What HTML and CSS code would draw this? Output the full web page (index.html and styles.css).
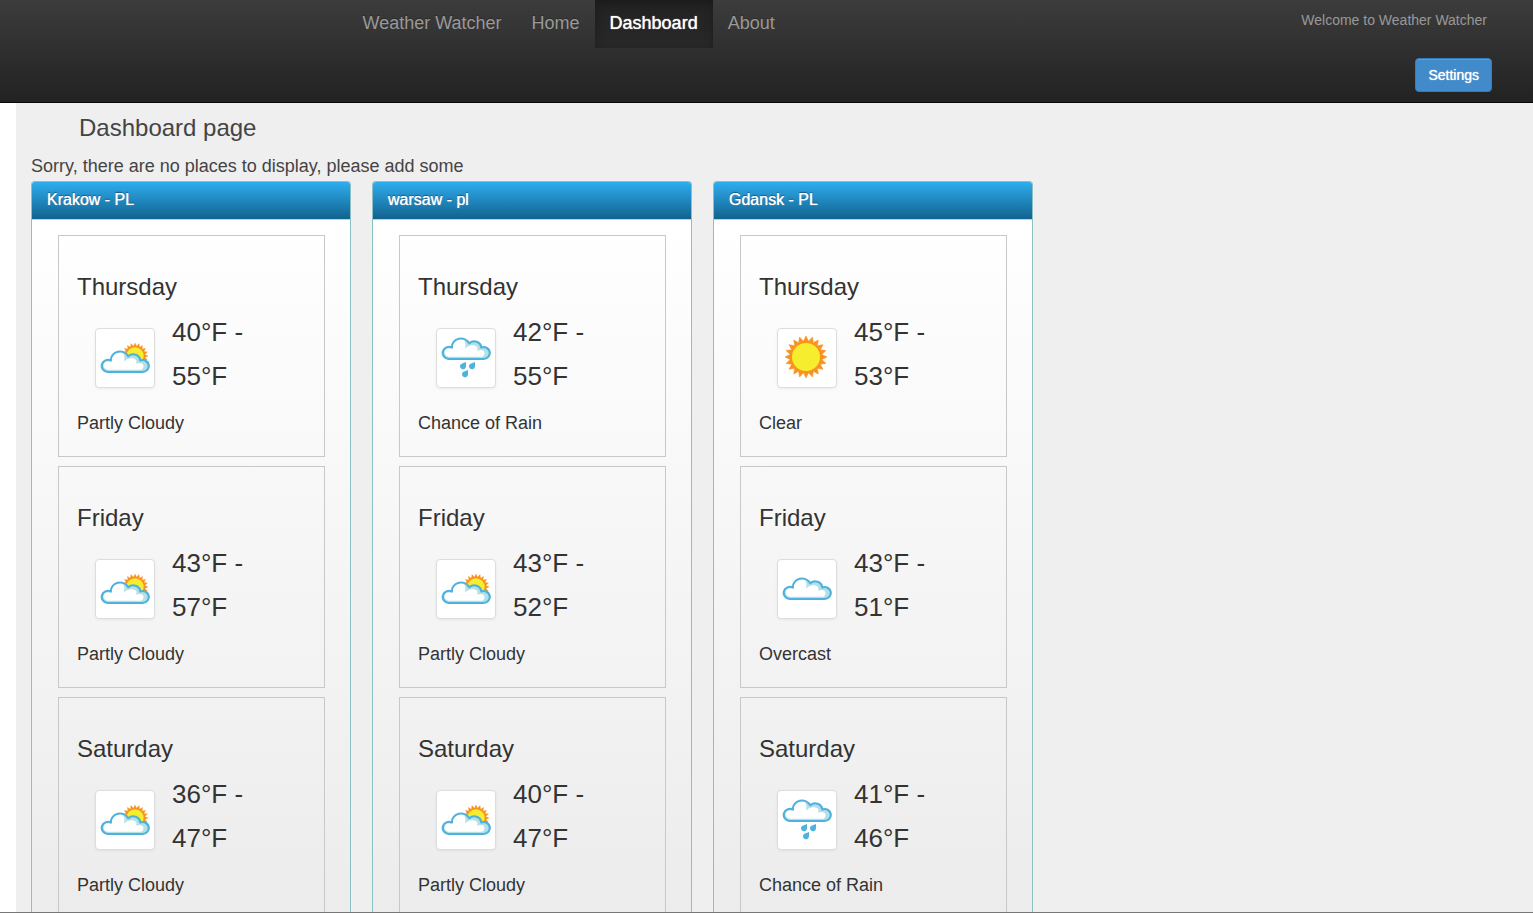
FILE: index.html
```html
<!DOCTYPE html>
<html lang="en">
<head>
<meta charset="utf-8">
<meta name="viewport" content="width=device-width, initial-scale=1">
<title>Weather Watcher</title>
<link rel="stylesheet" href="styles.css">
</head>
<body>
<svg class="sprite" aria-hidden="true">
  <symbol id="cloud" viewBox="2 0 44 22" preserveAspectRatio="none" overflow="visible">
    <path fill="#b4e0e6" d="M8 21A5.8 5.8 0 1 1 11 10A8.5 8.5 0 0 1 27 6A6.5 6.5 0 0 1 38 10A5.7 5.7 0 1 1 40 21Z"/>
    <path fill="#fff" d="M8 19A4.2 4.2 0 0 1 7 11L12 11A7.5 7.5 0 0 1 20 2Q25 4 23 11Q27 7 31 8Q36 9 34 13Q40 11 41 15Q41 19 37 19Z"/>
    <path fill="none" stroke="#4fb1dd" stroke-width="2" stroke-linejoin="round" d="M8 21A5.8 5.8 0 1 1 11 10A8.5 8.5 0 0 1 27 6A6.5 6.5 0 0 1 38 10A5.7 5.7 0 1 1 40 21Z"/>
  </symbol>
  <symbol id="sun" viewBox="-21 -21 42 42">
    <polygon fill="#f8931f" points="0,-21 2.5,-15.8 6.5,-20 7.3,-14.3 12.3,-17 11.3,-11.3 17,-12.3 14.3,-7.3 20,-6.5 15.8,-2.5 21,0 15.8,2.5 20,6.5 14.3,7.3 17,12.3 11.3,11.3 12.3,17 7.3,14.3 6.5,20 2.5,15.8 0,21 -2.5,15.8 -6.5,20 -7.3,14.3 -12.3,17 -11.3,11.3 -17,12.3 -14.3,7.3 -20,6.5 -15.8,2.5 -21,0 -15.8,-2.5 -20,-6.5 -14.3,-7.3 -17,-12.3 -11.3,-11.3 -12.3,-17 -7.3,-14.3 -6.5,-20 -2.5,-15.8" stroke="#f8931f" stroke-width=".6"/>
    <circle r="14" fill="#f6ed2e"/>
  </symbol>
  <symbol id="partly" viewBox="0 0 50 50">
    <use href="#sun" x="22" y="10" width="26" height="26"/>
    <use href="#cloud" x="1" y="17" width="48" height="23"/>
  </symbol>
  <symbol id="overcast" viewBox="0 0 50 50">
    <use href="#cloud" x="1" y="13" width="48" height="23"/>
  </symbol>
  <symbol id="clear" viewBox="0 0 50 50">
    <use href="#sun" x="3" y="3" width="42" height="42"/>
  </symbol>
  <symbol id="rain" viewBox="0 0 50 50">
    <use href="#cloud" x="1" y="4" width="48" height="23"/>
    <g fill="#4fb1dd">
      <path d="M25 29V33A3 3 0 1 1 20 31Z"/>
      <path d="M34 29V33A3 3 0 1 1 29 31Z"/>
      <path d="M27 37V41A3 3 0 1 1 22 39Z"/>
    </g>
  </symbol>
</svg>

<header class="navbar">
  <nav class="nav">
    <a class="nav-link" href="#">Weather Watcher</a>
    <a class="nav-link" href="#">Home</a>
    <a class="nav-link active" href="#" aria-current="page">Dashboard</a>
    <a class="nav-link" href="#">About</a>
  </nav>
  <div class="user">
    <p class="welcome">Welcome to Weather Watcher</p>
    <button class="btn" type="button">Settings</button>
  </div>
</header>

<main class="page">
  <h1 class="page-title">Dashboard page</h1>
  <p class="notice">Sorry, there are no places to display, please add some</p>
  <div class="places">
    <section class="place">
      <h2 class="place-title">Krakow - PL</h2>
      <div class="days">
        <article class="day">
          <h3 class="day-name">Thursday</h3>
          <div class="reading"><svg class="thumb" role="img" aria-label="Partly Cloudy"><use href="#partly"/></svg><p class="temps"><span>40°F -</span><span>55°F</span></p></div>
          <p class="summary">Partly Cloudy</p>
        </article>
        <article class="day">
          <h3 class="day-name">Friday</h3>
          <div class="reading"><svg class="thumb" role="img" aria-label="Partly Cloudy"><use href="#partly"/></svg><p class="temps"><span>43°F -</span><span>57°F</span></p></div>
          <p class="summary">Partly Cloudy</p>
        </article>
        <article class="day">
          <h3 class="day-name">Saturday</h3>
          <div class="reading"><svg class="thumb" role="img" aria-label="Partly Cloudy"><use href="#partly"/></svg><p class="temps"><span>36°F -</span><span>47°F</span></p></div>
          <p class="summary">Partly Cloudy</p>
        </article>
      </div>
    </section>
    <section class="place">
      <h2 class="place-title">warsaw - pl</h2>
      <div class="days">
        <article class="day">
          <h3 class="day-name">Thursday</h3>
          <div class="reading"><svg class="thumb" role="img" aria-label="Chance of Rain"><use href="#rain"/></svg><p class="temps"><span>42°F -</span><span>55°F</span></p></div>
          <p class="summary">Chance of Rain</p>
        </article>
        <article class="day">
          <h3 class="day-name">Friday</h3>
          <div class="reading"><svg class="thumb" role="img" aria-label="Partly Cloudy"><use href="#partly"/></svg><p class="temps"><span>43°F -</span><span>52°F</span></p></div>
          <p class="summary">Partly Cloudy</p>
        </article>
        <article class="day">
          <h3 class="day-name">Saturday</h3>
          <div class="reading"><svg class="thumb" role="img" aria-label="Partly Cloudy"><use href="#partly"/></svg><p class="temps"><span>40°F -</span><span>47°F</span></p></div>
          <p class="summary">Partly Cloudy</p>
        </article>
      </div>
    </section>
    <section class="place">
      <h2 class="place-title">Gdansk - PL</h2>
      <div class="days">
        <article class="day">
          <h3 class="day-name">Thursday</h3>
          <div class="reading"><svg class="thumb" role="img" aria-label="Clear"><use href="#clear"/></svg><p class="temps"><span>45°F -</span><span>53°F</span></p></div>
          <p class="summary">Clear</p>
        </article>
        <article class="day">
          <h3 class="day-name">Friday</h3>
          <div class="reading"><svg class="thumb" role="img" aria-label="Overcast"><use href="#overcast"/></svg><p class="temps"><span>43°F -</span><span>51°F</span></p></div>
          <p class="summary">Overcast</p>
        </article>
        <article class="day">
          <h3 class="day-name">Saturday</h3>
          <div class="reading"><svg class="thumb" role="img" aria-label="Chance of Rain"><use href="#rain"/></svg><p class="temps"><span>41°F -</span><span>46°F</span></p></div>
          <p class="summary">Chance of Rain</p>
        </article>
      </div>
    </section>
  </div>
</main>
</body>
</html>
```
FILE: styles.css
```css
* { box-sizing: border-box; }

body {
  margin: 0;
  height: 100vh;
  display: flex;
  flex-direction: column;
  overflow: hidden;
  background: #fff;
  border-bottom: 1px solid #777;
  color: #333;
  font: 18px/26px "Liberation Sans", Arial, sans-serif;
}

h1, h2, h3, p { margin: 0; font-weight: 400; }

.sprite { position: absolute; width: 0; height: 0; }

/* Top bar */
.navbar {
  flex: none;
  display: flex;
  justify-content: space-between;
  padding: 0 41px 10px calc(50% - 419px);
  background: linear-gradient(#3c3c3c, #222);
  border-bottom: 1px solid #080808;
}
.nav { display: flex; align-items: flex-start; }
.nav-link {
  padding: 10px 15px 12px;
  color: #999;
  text-decoration: none;
  text-shadow: 0 -1px 0 rgba(0, 0, 0, .25);
}
.nav-link.active {
  color: #fff;
  background: linear-gradient(#222, #282828);
  box-shadow: inset 0 3px 9px rgba(0, 0, 0, .25);
  text-shadow: 0 0 1px #fff;
}
.user {
  display: flex;
  flex-direction: column;
  align-items: flex-end;
  gap: 28px;
  padding-top: 10px;
}
.welcome {
  padding-right: 5px;
  color: #999;
  font-size: 14px;
  line-height: 20px;
}
.btn {
  padding: 6px 12px;
  border: 1px solid #357ebd;
  border-radius: 4px;
  background: #428bca;
  box-shadow: inset 0 1px 0 rgba(255, 255, 255, .15);
  color: #fff;
  font: 14px/20px "Liberation Sans", Arial, sans-serif;
  text-shadow: 0 0 1px #fff;
}

/* Page */
.page {
  flex: 1;
  min-height: 0;
  display: flex;
  flex-direction: column;
  margin-left: 16px;
  padding: 0 15px;
  background: #efefef;
  color: #444;
}
.page-title { padding-left: 48px; font-size: 24px; line-height: 50px; }
.notice { padding-bottom: 2px; }

.places { flex: 1; min-height: 0; display: flex; gap: 21px; }
.place {
  width: 320px;
  display: flex;
  flex-direction: column;
  overflow: hidden;
  border: 1px solid #8cc0c3;
  border-bottom: 0;
  border-radius: 4px 4px 0 0;
  background: linear-gradient(#fff 38px, #ececec);
  color: #333;
}
.place-title {
  padding: 5px 15px 6px;
  border-bottom: 1px solid #a9dbe4;
  background: linear-gradient(#2fadee, #11628f);
  color: #fff;
  font-size: 16px;
  text-shadow: 0 0 1px #fff, 0 -1px 1px #064067;
}
.days {
  display: flex;
  flex-direction: column;
  gap: 9px;
  padding: 15px 25px 0 26px;
}
.day {
  padding: 38px 18px 20px;
  border: 1px solid #c8c8c8;
}
.day-name { font-size: 24px; }
.reading {
  display: flex;
  align-items: flex-end;
  gap: 17px;
  padding: 10px 0 12px 18px;
}
.thumb {
  width: 60px;
  height: 60px;
  margin-bottom: 10px;
  padding: 4px;
  border: 1px solid #ddd;
  border-radius: 4px;
  background: #fff;
  box-shadow: 0 1px 3px rgba(0, 0, 0, .06);
}
.temps { font-size: 26px; line-height: 44px; }
.temps span { display: block; }
```
